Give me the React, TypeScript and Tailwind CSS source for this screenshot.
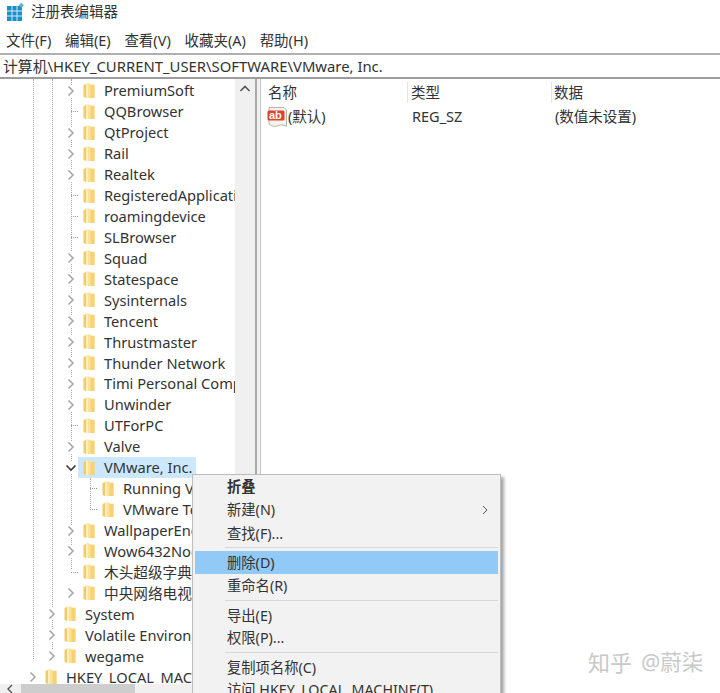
import React from "react";

const FONT = "font-['Noto_Sans','Noto_Sans_CJK_SC',sans-serif]";

function Folder() {
  return (
    <svg width="12" height="16" viewBox="0 0 12 16" className="shrink-0">
      <path d="M0.5 2 L3 1 L3 15 L0.5 14 Z" fill="#f0cb6b" />
      <path d="M3 0.5 H7 L8 1.5 H11.5 V15 H3 Z" fill="#fbe29b" />
      <path d="M7.5 2 H11.5 V15 H7.5 Z" fill="#f7d275" />
      <path d="M3 0.5 H5 V15 H3 Z" fill="#feeebd" />
    </svg>
  );
}

function Chevron({ open }: { open?: boolean }) {
  return open ? (
    <svg width="12" height="12" viewBox="0 0 12 12" className="shrink-0">
      <path d="M1.5 3.5 L6 8 L10.5 3.5" fill="none" stroke="#3a3a3a" strokeWidth="1.6" />
    </svg>
  ) : (
    <svg width="12" height="12" viewBox="0 0 12 12" className="shrink-0">
      <path d="M3.5 1.5 L8 6 L3.5 10.5" fill="none" stroke="#a6a6a6" strokeWidth="1.5" />
    </svg>
  );
}

type Row = { t: string; x: number; leaf?: boolean; open?: boolean; sel?: boolean };

const rows: Row[] = [
  { t: "PremiumSoft", x: 64 },
  { t: "QQBrowser", x: 64, leaf: true },
  { t: "QtProject", x: 64 },
  { t: "Rail", x: 64 },
  { t: "Realtek", x: 64 },
  { t: "RegisteredApplications", x: 64, leaf: true },
  { t: "roamingdevice", x: 64, leaf: true },
  { t: "SLBrowser", x: 64, leaf: true },
  { t: "Squad", x: 64 },
  { t: "Statespace", x: 64 },
  { t: "Sysinternals", x: 64 },
  { t: "Tencent", x: 64 },
  { t: "Thrustmaster", x: 64 },
  { t: "Thunder Network", x: 64 },
  { t: "Timi Personal Computing", x: 64 },
  { t: "Unwinder", x: 64 },
  { t: "UTForPC", x: 64, leaf: true },
  { t: "Valve", x: 64 },
  { t: "VMware, Inc.", x: 64, open: true, sel: true },
  { t: "Running VM", x: 83, leaf: true },
  { t: "VMware Tools", x: 83, leaf: true },
  { t: "WallpaperEngine", x: 64 },
  { t: "Wow6432Node", x: 64 },
  { t: "木头超级字典生成器", x: 64, leaf: true },
  { t: "中央网络电视台", x: 64 },
  { t: "System", x: 45 },
  { t: "Volatile Environment", x: 45 },
  { t: "wegame", x: 45 },
  { t: "HKEY_LOCAL_MACHINE", x: 26 },
];

function TreeRow({ r }: { r: Row }) {
  return (
    <div className="relative h-[20.95px] flex items-center whitespace-nowrap" style={{ paddingLeft: r.x }}>
      <div className="w-[14px] h-[15px] shrink-0 flex items-center justify-center">
        {r.leaf ? (
          <span className="block w-[7px] ml-[7px] border-t border-dotted border-[#9a9a9a]" />
        ) : (
          <span className="flex bg-white">
            <Chevron open={r.open} />
          </span>
        )}
      </div>
      <div className={`flex items-center shrink-0 h-[21px] pl-[5px] pr-[3px] ${r.sel ? "bg-[#cce8ff]" : ""}`}>
        <Folder />
        <span className="text-[14.65px] leading-[21px] text-[#333] ml-[9px]">{r.t}</span>
      </div>
    </div>
  );
}

function Item({
  t,
  sub,
  bold,
  hot,
  short,
  nudge,
}: {
  t: string;
  sub?: boolean;
  bold?: boolean;
  hot?: boolean;
  short?: boolean;
  nudge?: boolean;
}) {
  return (
    <div
      className={`${short ? "h-[22px]" : "h-[23px]"} ${nudge ? "pt-[2px]" : ""} flex items-center justify-between pl-[32px] pr-[9px] text-[14.3px] text-[#333] whitespace-nowrap ${
        hot ? "bg-[#91c9f7]" : ""
      } ${bold ? "font-bold" : ""}`}
    >
      <span>{t}</span>
      {sub && (
        <svg width="8" height="10" viewBox="0 0 8 10">
          <path d="M2 1 L6 5 L2 9" fill="none" stroke="#555" strokeWidth="1" />
        </svg>
      )}
    </div>
  );
}

function Sep() {
  return <div className="h-[1px] ml-[30px] my-[3px] bg-[#d7d7d7]" />;
}

export default function App() {
  return (
    <div className={`relative w-[720px] h-[693px] overflow-hidden bg-white ${FONT}`}>
      {/* title */}
      <div className="h-[28px] flex items-start pl-[7px] pt-[3px] gap-[6px]">
        <svg width="18" height="18" viewBox="0 0 18 18" className="shrink-0">
          <rect x="0" y="3" width="15" height="15" fill="#1a90c8" />
          <path d="M5 3 V18 M10 3 V18 M0 8 H15 M0 13 H15" stroke="#cfeaf7" strokeWidth="1" />
          <rect x="12.5" y="0.5" width="3.6" height="3.6" fill="#55b4dd" transform="rotate(45 14.3 2.3)" />
        </svg>
        <span className="text-[14.5px] leading-[18px] text-[#333] -mt-[1px]">注册表编辑器</span>
      </div>
      {/* menu */}
      <div className="h-[25px] flex items-center pl-[6px] gap-[13.7px] text-[14.5px] text-[#333] whitespace-nowrap">
        <span>文件(F)</span>
        <span>编辑(E)</span>
        <span>查看(V)</span>
        <span>收藏夹(A)</span>
        <span>帮助(H)</span>
      </div>
      {/* address */}
      <div className="h-[26px] border-y-2 border-y-[#9c9c9c] border-t-[#b0b0b0] flex items-center pl-[3px] text-[14.85px] text-[#333] whitespace-nowrap">
        计算机\HKEY_CURRENT_USER\SOFTWARE\VMware, Inc.
      </div>
      {/* body */}
      <div className="flex h-[614px]">
        <div className="relative w-[255px] shrink-0 overflow-hidden flex flex-col">
          <div className="flex flex-1 min-h-0">
            <div className="relative w-[235px] overflow-hidden pt-[1.4px]">
              {/* guides */}
              <div className="absolute left-[33px] top-0 h-[580px] border-l border-dotted border-[#a8a8a8]" />
              <div className="absolute left-[52px] top-0 h-[580px] border-l border-dotted border-[#a8a8a8]" />
              <div className="absolute left-[71px] top-0 h-[490px] border-l border-dotted border-[#a8a8a8]" />
              <div className="absolute left-[90px] top-[399px] h-[32px] border-l border-dotted border-[#a8a8a8]" />
              <div className="relative">
                {rows.map((r) => (
                  <TreeRow key={r.t} r={r} />
                ))}
              </div>
            </div>
            <div className="w-[20px] bg-[#f0f0f0] flex justify-center pt-[4px]">
              <svg width="12" height="12" viewBox="0 0 12 12">
                <path d="M1.5 8 L6 3.5 L10.5 8" fill="none" stroke="#555" strokeWidth="1.6" />
              </svg>
            </div>
          </div>
          <div className="h-[9px] bg-[#f0f0f0] flex shrink-0">
            <div className="w-[21px] flex items-start pl-[6px]">
              <svg width="8" height="9" viewBox="0 0 8 9">
                <path d="M6 1 L2 5 L6 9" fill="none" stroke="#555" strokeWidth="1.4" />
              </svg>
            </div>
            <div className="w-[114px] bg-[#cdcdcd]" />
          </div>
        </div>
        <div className="w-[6px] shrink-0 bg-[#f0f0f0] border-l-2 border-l-[#a8a8a8] border-r border-r-[#c8c8c8]" />
        {/* list */}
        <div className="flex-1 text-[14.5px] text-[#333] whitespace-nowrap">
          <div className="h-[27px] flex items-center">
            <div className="w-[146px] pl-[7px]">名称</div>
            <div className="w-[144px] pl-[3px] border-l border-[#e5e5e5]">类型</div>
            <div className="pl-[2px] border-l border-[#e5e5e5]">数据</div>
          </div>
          <div className="h-[22px] flex items-center">
            <div className="w-[148px] pl-[6px] flex items-center gap-[1px]">
              <svg width="20" height="20" viewBox="0 0 20 20" className="shrink-0">
                <path d="M2 0.5 H17 L19.5 3 V19.5 C16 17 13 18 10 19 C7 20 4 19 2 17 Z" fill="#f6f2ec" stroke="#b9b3aa" />
                <rect x="0.5" y="3.5" width="17" height="10" rx="1.5" fill="#d9432f" />
                <text x="2" y="12" fontSize="11" fontWeight="700" fill="#ffffff" fontFamily="Liberation Sans">ab</text>
              </svg>
              <span>(默认)</span>
            </div>
            <div className="w-[146px] pl-[3px]">REG_SZ</div>
            <div>(数值未设置)</div>
          </div>
        </div>
      </div>
      {/* context menu */}
      <div className="absolute left-[192px] top-[474px] w-[309px] h-[240px] bg-[#f2f2f2] border border-[#bdbdbd] shadow-[3px_3px_3px_rgba(0,0,0,0.35)] px-[2px]">
        <Item t="折叠" bold />
        <Item t="新建(N)" sub />
        <Item t="查找(F)..." nudge />
        <Sep />
        <Item t="删除(D)" hot />
        <Item t="重命名(R)" />
        <Sep />
        <Item t="导出(E)" short nudge />
        <Item t="权限(P)..." />
        <Sep />
        <Item t="复制项名称(C)" short nudge />
        <Item t="访问 HKEY_LOCAL_MACHINE(T)" />
      </div>
      {/* watermark */}
      <div className="absolute left-[588px] top-[647px] flex items-center gap-[9px] text-[22px] leading-[30px] text-[#c9c9c9] whitespace-nowrap">
        <span>知乎</span>
        <span className="text-[21.5px]">@蔚柒</span>
      </div>
    </div>
  );
}
